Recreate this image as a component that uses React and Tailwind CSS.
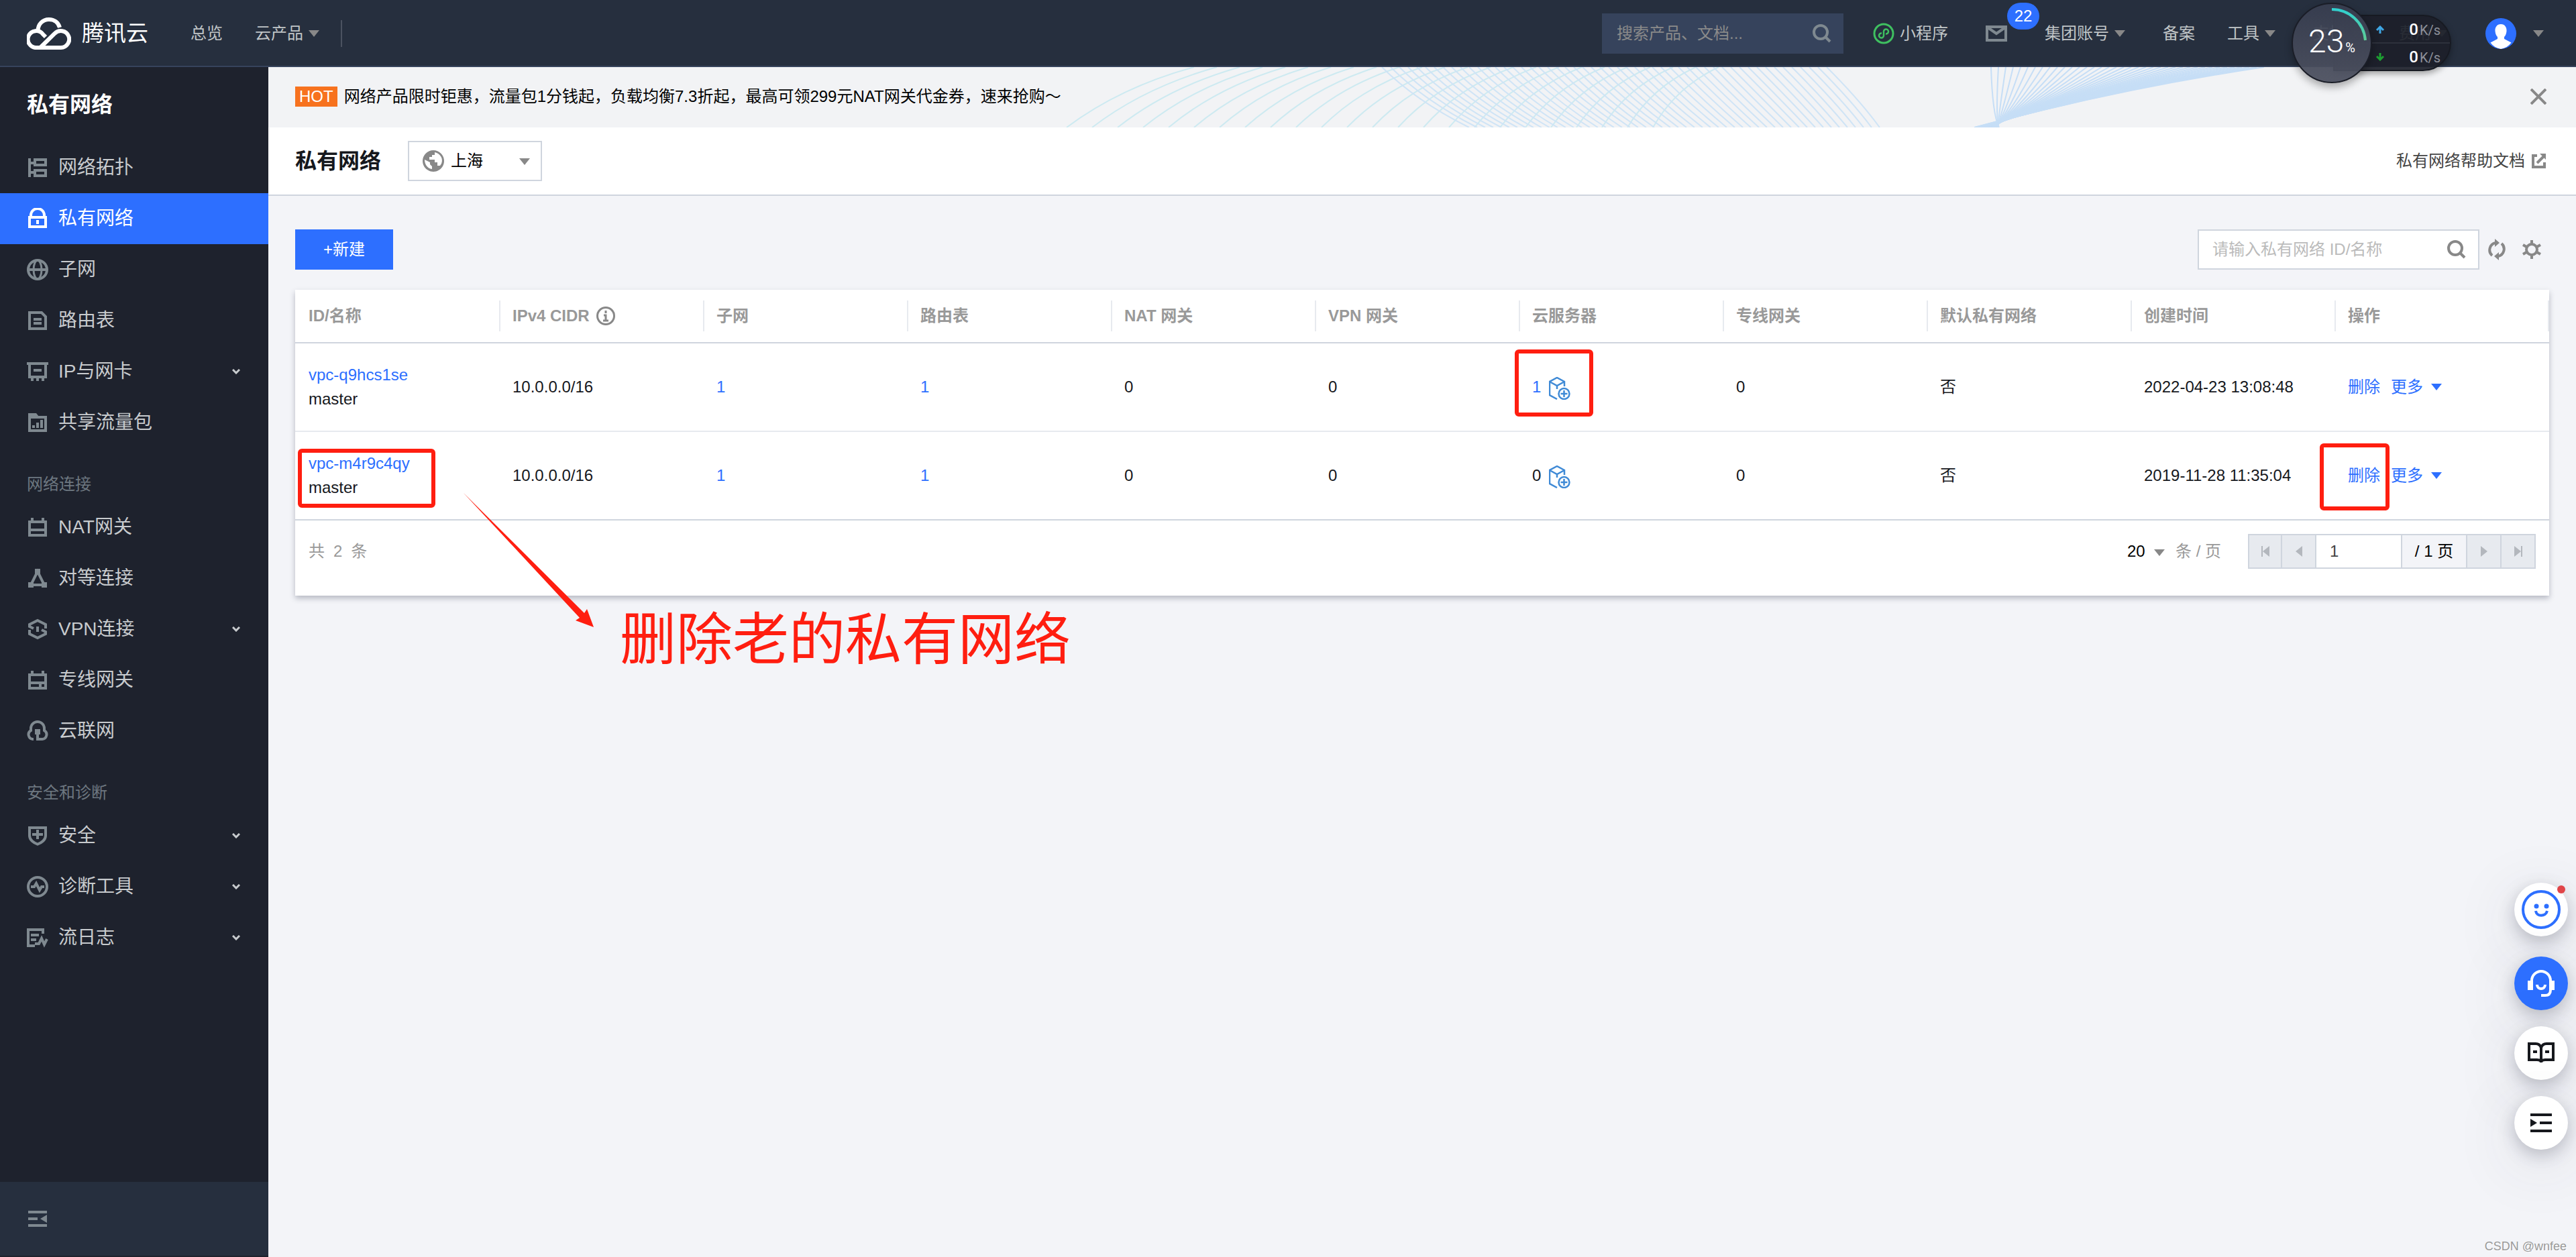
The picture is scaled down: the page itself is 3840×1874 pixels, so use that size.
const navGroups = [
  {
    title: "",
    items: [
      { label: "网络拓扑", icon: "topology" },
      { label: "私有网络", icon: "lock", active: true },
      { label: "子网", icon: "globe" },
      { label: "路由表", icon: "doc" },
      { label: "IP与网卡", icon: "card", expandable: true },
      { label: "共享流量包", icon: "traffic" },
    ],
  },
  {
    title: "网络连接",
    items: [
      { label: "NAT网关", icon: "nat" },
      { label: "对等连接", icon: "peer" },
      { label: "VPN连接", icon: "vpn", expandable: true },
      { label: "专线网关", icon: "direct" },
      { label: "云联网", icon: "ccn" },
    ],
  },
  {
    title: "安全和诊断",
    items: [
      { label: "安全", icon: "shield", expandable: true },
      { label: "诊断工具", icon: "pulse", expandable: true },
      { label: "流日志", icon: "log", expandable: true },
    ],
  },
];

const columns = [
  "ID/名称",
  "IPv4 CIDR",
  "子网",
  "路由表",
  "NAT 网关",
  "VPN 网关",
  "云服务器",
  "专线网关",
  "默认私有网络",
  "创建时间",
  "操作",
];

const vpcs = [
  { id: "vpc-q9hcs1se", name: "master", cidr: "10.0.0.0/16", servers: 1, created: "2022-04-23 13:08:48", mark: "servers" },
  { id: "vpc-m4r9c4qy", name: "master", cidr: "10.0.0.0/16", servers: 0, created: "2019-11-28 11:35:04", mark: "row" },
];

const navIcons = {
  topology: (
    <>
      <path d="M2 1v14M2 4.5h4M2 11.5h4" />
      <path d="M6 2h8v4H6zM6 10h8v4H6z" />
    </>
  ),
  lock: (
    <>
      <path d="M3 7V5.500a5 5 0 0 1 10 0V7" />
      <path d="M2 7h12v7H2z" />
      <path d="M8 9v3" />
    </>
  ),
  globe: (
    <>
      <circle cx="8" cy="8" r="7" />
      <ellipse cx="8" cy="8" rx="3" ry="7" strokeWidth="1.5" />
      <path d="M1 8h14" strokeWidth="2" />
    </>
  ),
  doc: (
    <>
      <path d="M2 2h9l3 3v9H2z" />
      <path d="M5 7h6M5 10h6" />
    </>
  ),
  card: (
    <>
      <path d="M0 2h16M2 2v10h12V2M4 12v3M8 12v3M12 12v3" />
      <path d="M5 7h6" />
    </>
  ),
  traffic: (
    <>
      <path d="M2 4h12v10H2z" />
      <path d="M1 1h6l2 2.500H1z" fill="currentColor" stroke="none" />
      <path d="M5 10v2M8 8v4M11 6v6" />
    </>
  ),
  nat: <path d="M2 4h12v10H2zM2 10h12M4 1v3M12 1v3" />,
  direct: <path d="M2 4h12v10H2zM2 10h12M4 1v3M12 1v3M10 10v4" />,
  peer: (
    <>
      <path d="M8 3L3 13h10z" />
      <path d="M6 1h4v4H6zM1 11h4v4H1zM11 11h4v4h-4z" fill="currentColor" stroke="none" />
    </>
  ),
  vpn: (
    <>
      <path d="M5 7.500L2 6V4.500l6-3 6 3V7.500" />
      <path d="M11 8.500L14 10v1.500l-6 3-6-3V8.500" />
      <path d="M8 6v4" />
    </>
  ),
  ccn: (
    <>
      <path d="M5 14H4.500A3.500 3.500 0 0 1 3 7.500V6a5 5 0 0 1 10 0v1.500A3.500 3.500 0 0 1 11.500 14H8V8" />
      <path d="M6 6.500h4v4H6z" fill="currentColor" stroke="none" />
    </>
  ),
  shield: (
    <>
      <path d="M2 2h12v6c0 3-3 5.300-6 6.300C5 13.300 2 11 2 8z" />
      <path d="M4 7h8M8 3.500v7" />
    </>
  ),
  pulse: (
    <>
      <circle cx="8" cy="8" r="7" />
      <path d="M3 8h2.500L7 5.500l2.500 5L11 8h2" />
    </>
  ),
  log: (
    <>
      <path d="M12 5V2H1v12h5" />
      <path d="M3 6h6M3 9.500h4M6 12.500h3l2-4 2 4.500 2-4" />
    </>
  ),
};

function NavIcon({ name }) {
  return (
    <svg className="size-8 shrink-0" viewBox="0 0 16 16" fill="none" stroke="currentColor" strokeWidth="2" aria-hidden="true">
      {navIcons[name]}
    </svg>
  );
}

function Caret({ className = "text-[#888]" }) {
  return (
    <svg className={`h-2.5 w-4 shrink-0 ${className}`} viewBox="0 0 16 10" fill="currentColor" aria-hidden="true">
      <path d="M0 0h16L8 10z" />
    </svg>
  );
}

function SearchIcon({ className }) {
  return (
    <svg className={`size-7 ${className}`} viewBox="0 0 28 28" fill="none" stroke="currentColor" strokeWidth="4" aria-hidden="true">
      <circle cx="12" cy="12" r="10" />
      <path d="M19 19l7 7" />
    </svg>
  );
}

function Logo() {
  return (
    <a href="#home" className="flex w-46 items-center gap-4 text-white">
      <svg className="h-12 w-[66px] shrink-0" viewBox="0 0 66 48" fill="none" stroke="currentColor" strokeWidth="6" aria-hidden="true">
        <path d="M28 29l-4-4A12.500 12.500 0 1 0 15.500 45H50.500A12.500 12.500 0 1 0 41.500 24L20 45" />
        <path d="M16.500 20C16.500 10 23.500 3 33 3c8 0 14 4.500 16 12" />
      </svg>
      <span className="text-[33px] leading-12 whitespace-nowrap">腾讯云</span>
    </a>
  );
}

function MonitorWidget() {
  return (
    <div className="absolute top-1 right-[186px] flex h-30 w-[238px] items-start">
      <div className="absolute top-[18px] right-0 flex h-[84px] w-44 flex-col rounded-r-[42px] border-2 border-[#171a22] bg-[#1c1f29]/92 shadow-[0_4px_10px_rgba(0,0,0,0.35)]">
        <Rate className="border-b-2 border-[#2d313c]">
          <path d="M7 12V2M2 7l5-5 5 5" stroke="#3ea6e4" />
        </Rate>
        <Rate>
          <path d="M7 0v10M2 5l5 5 5-5" stroke="#1da032" />
        </Rate>
      </div>
      <div className="relative flex size-30 items-center justify-center rounded-full border-2 border-[#1a1d27] bg-linear-to-b from-[#383e50]/92 to-[#4c505f]/95 shadow-[0_6px_12px_rgba(0,0,0,0.3)]">
        <svg className="absolute inset-0 size-full" viewBox="0 0 116 116" fill="none" aria-hidden="true">
          <defs>
            <linearGradient id="arc" x1="0" y1="0" x2="0" y2="1">
              <stop offset="0" stopColor="#31d0cf" />
              <stop offset="1" stopColor="#5ecb96" />
            </linearGradient>
          </defs>
          <path d="M58 8A50 50 0 0 1 108 54" stroke="url(#arc)" strokeWidth="4" />
        </svg>
        <div className="flex items-baseline gap-0.5 pb-1 text-white">
          <span className="font-[Roboto] text-5xl font-light">23</span>
          <span className="font-[Roboto] text-xl">%</span>
        </div>
      </div>
    </div>
  );
}

function Rate({ children, className = "" }) {
  return (
    <div className={`flex flex-1 items-center justify-end gap-9 pr-3.5 ${className}`}>
      <svg className="h-3 w-3.5" viewBox="0 0 14 12" fill="none" strokeWidth="3" aria-hidden="true">
        {children}
      </svg>
      <span className="flex items-baseline gap-0.5 font-[Roboto]">
        <b className="text-2xl font-medium text-white">0</b>
        <span className="text-xl text-[#8d919b]">K/s</span>
      </span>
    </div>
  );
}

function TopBar() {
  const menu = "flex items-center gap-2";
  return (
    <header className="relative z-10 flex h-25 shrink-0 items-center justify-between border-b-2 border-[#36435c] bg-[#262f3e] pt-0.5 pr-12 pl-10 text-2xl text-[#c1c6c8]">
      <div className="flex items-center">
        <Logo />
        <a href="#overview" className="ml-15">总览</a>
        <button type="button" className={`${menu} ml-12`}>云产品 <Caret /></button>
        <span className="ml-8 h-10 w-0.5 bg-[#4b5260]" />
      </div>
      <div className="flex items-center gap-14">
        <div className="flex items-center gap-11">
          <label className="flex h-15 w-90 items-center justify-between bg-[#36435c] pr-4.5 pl-5.5">
            <input className="w-64 bg-transparent outline-none placeholder:text-[#8a8a8a]" placeholder="搜索产品、文档..." aria-label="搜索产品、文档" />
            <SearchIcon className="text-[#7f8990]" />
          </label>
          <a href="#mini" className={menu}>
            <svg className="size-8" viewBox="0 0 32 32" fill="none" stroke="#3fc060" strokeWidth="3" aria-hidden="true">
              <circle cx="16" cy="16" r="14" />
              <path d="M13 15.500a3.500 3.500 0 1 0 3 3.500v-6a3.500 3.500 0 1 1 3 3.500" strokeWidth="2.500" />
            </svg>
            小程序
          </a>
        </div>
        <a href="#messages" className="relative" aria-label="消息">
          <svg className="h-6 w-8" viewBox="0 0 32 24" fill="none" stroke="#7f8990" strokeWidth="4" aria-hidden="true">
            <path d="M2 2h28v20H2zM3 3l13 9 13-9" />
          </svg>
          <span className="absolute -top-8.5 left-8 flex h-10 w-12 items-center justify-center rounded-full bg-[#2d6fff] text-2xl text-white">22</span>
        </a>
        <button type="button" className={menu}>集团账号 <Caret /></button>
        <div className="flex items-center gap-12">
          <a href="#beian">备案</a>
          <button type="button" className={menu}>工具 <Caret /></button>
        </div>
        <button type="button" className={menu}>支持 <Caret /></button>
        <button type="button" className={menu}>费用 <Caret /></button>
        <button type="button" className="flex items-center gap-6" aria-label="账号">
          <svg className="size-12" viewBox="0 0 48 48" aria-hidden="true">
            <circle cx="24" cy="24" r="23" fill="#2d6fff" />
            <path d="M24 10c6 0 9 5 8.500 10.500-.4 4-1.500 6.500-3.500 8.500v3l10.500 5.500A23 23 0 0 1 24 47 23 23 0 0 1 8.500 37.500L19 32v-3c-2-2-3.100-4.500-3.500-8.500C15 15 18 10 24 10z" fill="#fff" />
          </svg>
          <Caret />
        </button>
      </div>
      <MonitorWidget />
    </header>
  );
}

function Sidebar() {
  return (
    <aside className="flex w-100 shrink-0 flex-col bg-[#1e222d] text-[28px] text-[#c8cbce]">
      <h2 className="flex h-28 items-center px-10 text-[32px] font-bold text-white">私有网络</h2>
      <nav className="flex-1">
        {navGroups.map((group) => (
          <div key={group.title}>
            {group.title && <h3 className="px-10 pt-10 pb-3 text-2xl leading-7 text-[#6d7780]">{group.title}</h3>}
            {group.items.map((item) => (
              <a
                key={item.label}
                href={`#${item.icon}`}
                className={`flex h-19 items-center gap-[15px] pr-10.5 pl-10 ${item.active ? "bg-[#2d6fff] text-white" : ""}`}
              >
                <span className={item.active ? "text-white" : "text-[#7f8990]"}>
                  <NavIcon name={item.icon} />
                </span>
                {item.label}
                {item.expandable && (
                  <svg className="ml-auto h-2 w-3" viewBox="0 0 12 8" fill="none" stroke="currentColor" strokeWidth="3" aria-hidden="true">
                    <path d="M1 1l5 5 5-5" />
                  </svg>
                )}
              </a>
            ))}
          </div>
        ))}
      </nav>
      <div className="flex h-28 items-center border-b-2 border-[#1e222d] bg-[#262f3e] px-10">
        <button type="button" aria-label="收起菜单">
          <svg className="size-8 text-[#7f8990]" viewBox="0 0 16 16" fill="currentColor" aria-hidden="true">
            <path d="M1 2h14v2H1zM1 7h7v2H1zM1 12h14v2H1zM15 5v6l-5-3z" />
          </svg>
        </button>
      </div>
    </aside>
  );
}

function BannerArt() {
  const rise = Array.from({ length: 24 }, (_, i) => i);
  const wave = Array.from({ length: 52 }, (_, i) => i);
  const fan = Array.from({ length: 38 }, (_, i) => i);
  return (
    <svg className="absolute top-0 right-[440px] h-full w-[1820px]" viewBox="0 0 1820 90" preserveAspectRatio="none" fill="none" strokeWidth="2" aria-hidden="true">
      <g stroke="#cdeaf1">
        {rise.map((i) => (
          <path key={i} d={`M${10 + i * 38} 90Q${90 + i * 36} 30 ${200 + i * 34} 0`} />
        ))}
      </g>
      <g stroke="#cfe4f6">
        {wave.map((i) => (
          <path key={i} d={`M${480 + i * 13} 0Q${530 + i * 13} 50 ${610 + i * 12} 90`} />
        ))}
      </g>
      <g stroke="#c6def6">
        {fan.map((i) => (
          <path key={i} d={`M${1388 + i * 11} 0Q${1390 + i * 5} ${70 - i} ${1400 - i} 90`} />
        ))}
      </g>
    </svg>
  );
}

function Banner() {
  return (
    <div className="relative flex h-22.5 items-center justify-between overflow-hidden bg-[#f2f3f5] pr-11 pb-0.5 pl-10 text-2xl text-black">
      <BannerArt />
      <p className="relative flex items-center gap-2.5">
        <span className="bg-[#f7721e] px-1.5 leading-[30px] text-white">HOT</span>
        网络产品限时钜惠，流量包1分钱起，负载均衡7.3折起，最高可领299元NAT网关代金券，速来抢购～
      </p>
      <button type="button" className="relative" aria-label="关闭">
        <svg className="size-6 text-[#888]" viewBox="0 0 24 24" stroke="currentColor" strokeWidth="4" aria-hidden="true">
          <path d="M1 1l22 22M23 1L1 23" />
        </svg>
      </button>
    </div>
  );
}

function PageHeader() {
  return (
    <div className="flex h-[102px] items-center justify-between border-b-2 border-[#cfd5de] bg-white pr-11 pl-10 text-2xl">
      <div className="flex items-center gap-10">
        <h1 className="text-[32px] font-bold text-[#16181d]">私有网络</h1>
        <div className="relative">
          <select aria-label="地域" className="h-15 w-50 appearance-none border-2 border-[#cfd5de] bg-white pl-15.5 text-black">
            <option>上海</option>
          </select>
          <svg className="pointer-events-none absolute top-3.5 left-5.5 size-8" viewBox="0 0 32 32" aria-hidden="true">
            <circle cx="16" cy="16" r="16" fill="#888" />
            <path d="M18 3v4h-4v3h-4v4h8v4h4v5h4l2-3c3-7-1-15-10-17zM3 14c0 7 4 13 11 14v-4l-3-3v-3z" fill="#fff" />
          </svg>
          <span className="pointer-events-none absolute top-6.5 right-4.5 flex"><Caret /></span>
        </div>
      </div>
      <a href="#docs" className="flex items-center gap-2 text-[#444]">
        私有网络帮助文档
        <svg className="size-6" viewBox="0 0 24 24" fill="none" stroke="#888" strokeWidth="4" aria-hidden="true">
          <path d="M10 4H4v17h17v-7M10 15L20 5" />
          <path d="M14 1h9v9z" fill="#888" stroke="none" />
        </svg>
      </a>
    </div>
  );
}

function Toolbar() {
  return (
    <div className="flex items-center justify-between pr-3 text-2xl">
      <button type="button" className="h-15 bg-[#2d6fff] px-10.5 text-white">+新建</button>
      <div className="flex items-center gap-3">
        <label className="flex h-15 w-105 items-center justify-between border-2 border-[#cfd5de] bg-white pr-4.5 pl-5">
          <input className="w-80 bg-transparent outline-none placeholder:text-[#bbb]" placeholder="请输入私有网络 ID/名称" aria-label="请输入私有网络 ID/名称" />
          <SearchIcon className="text-[#888]" />
        </label>
        <button type="button" aria-label="刷新">
          <svg className="h-8 w-7" viewBox="0 0 28 32" fill="none" stroke="#888" strokeWidth="4" aria-hidden="true">
            <path d="M7 25A11 11 0 0 1 12 6M21 7a11 11 0 0 1-5 19" />
            <path d="M11 0l7 6-7 6zM17 20l-7 6 7 6z" fill="#888" stroke="none" />
          </svg>
        </button>
        <button type="button" className="ml-3" aria-label="设置">
          <svg className="size-7" viewBox="0 0 28 28" fill="none" stroke="#888" strokeWidth="4" aria-hidden="true">
            <circle cx="14" cy="14" r="8" />
            <path d="M14 0v6M14 22v6M1 7l6 3.500M21 17.500l6 3.500M27 7l-6 3.500M7 17.500L1 21" />
          </svg>
        </button>
      </div>
    </div>
  );
}

function InfoIcon() {
  return (
    <svg className="size-7" viewBox="0 0 28 28" fill="none" stroke="#888" strokeWidth="3" aria-hidden="true">
      <circle cx="14" cy="14" r="12.500" />
      <path d="M14 6v4M11 13h3v8M10 21h8" />
    </svg>
  );
}

function AddServerIcon() {
  return (
    <svg className="h-[34px] w-8" viewBox="0 0 32 34" fill="none" stroke="#3f8ad6" strokeWidth="2.500" aria-hidden="true">
      <path d="M23 14V7L12 1 1 7v20l11 6M1 7l11 6 11-6M12 13v5" />
      <circle cx="22.500" cy="25" r="8" />
      <path d="M22.500 20v10M17.500 25h10" />
    </svg>
  );
}

function VpcRow({ vpc, last }) {
  const cell = `h-33 border-b-2 pl-5 text-left align-middle ${last ? "border-[#cfd5de]" : "border-[#e7eaef]"}`;
  const mark = "pointer-events-none absolute rounded-md border-6 border-[#ff1e10]";
  return (
    <tr>
      <td className={`${cell} relative leading-9`}>
        <a href={`#${vpc.id}`} className="block text-[#2d6fff]">{vpc.id}</a>
        {vpc.name}
        {vpc.mark === "row" && <span className={`${mark} top-[25px] left-1 h-22 w-[205px]`} />}
      </td>
      <td className={cell}>{vpc.cidr}</td>
      <td className={cell}><a href="#subnets" className="text-[#2d6fff]">1</a></td>
      <td className={cell}><a href="#routes" className="text-[#2d6fff]">1</a></td>
      <td className={cell}>0</td>
      <td className={cell}>0</td>
      <td className={`${cell} relative`}>
        <span className="flex items-center gap-3">
          {vpc.servers > 0 ? <a href="#servers" className="text-[#2d6fff]">{vpc.servers}</a> : vpc.servers}
          <button type="button" className="pt-1" aria-label="添加云服务器"><AddServerIcon /></button>
        </span>
        {vpc.mark === "servers" && <span className={`${mark} top-[9px] -left-1.5 h-25 w-[117px]`} />}
      </td>
      <td className={cell}>0</td>
      <td className={cell}>否</td>
      <td className={cell}>{vpc.created}</td>
      <td className={`${cell} relative text-[#2d6fff]`}>
        <span className="flex items-center gap-4">
          <button type="button">删除</button>
          <button type="button" className="flex items-center gap-3">更多 <Caret className="text-[#2d6fff]" /></button>
        </span>
        {vpc.mark === "row" && <span className={`${mark} top-[17px] -left-5.5 h-25 w-[104px]`} />}
      </td>
    </tr>
  );
}

function Pager() {
  const box = "flex h-13 items-center justify-center border-y-2 border-r-2 border-[#cfd5de]";
  const step = `${box} w-[51px] bg-[#e7eaef] text-[#b3b7bd]`;
  return (
    <div className="flex">
      <button type="button" className={`${step} border-l-2`} aria-label="第一页">
        <svg className="h-4 w-3" viewBox="0 0 12 16" fill="currentColor"><path d="M0 0h2v16H0zM12 0v16L2 8z" /></svg>
      </button>
      <button type="button" className={step} aria-label="上一页">
        <svg className="h-4 w-2.5" viewBox="0 0 10 16" fill="currentColor"><path d="M10 0v16L0 8z" /></svg>
      </button>
      <input aria-label="页码" defaultValue="1" className="h-13 w-32 border-y-2 border-r-2 border-[#cfd5de] bg-white pl-5 text-[#444]" />
      <span className={`${box} w-[97px] bg-[#f3f4f8] text-black`}>/ 1 页</span>
      <button type="button" className={step} aria-label="下一页">
        <svg className="h-4 w-2.5" viewBox="0 0 10 16" fill="currentColor"><path d="M0 0v16l10-8z" /></svg>
      </button>
      <button type="button" className={step} aria-label="最后一页">
        <svg className="h-4 w-3" viewBox="0 0 12 16" fill="currentColor"><path d="M10 0h2v16h-2zM0 0v16l10-8z" /></svg>
      </button>
    </div>
  );
}

function VpcTable() {
  return (
    <section className="mt-[30px] bg-white text-2xl text-[#16181d] shadow-[0_4px_8px_rgba(54,58,80,0.32)]">
      <table className="w-full table-fixed border-separate border-spacing-0">
        <thead>
          <tr>
            {columns.map((name, i) => (
              <th key={name} className="w-76 border-b-2 border-[#cfd5de] py-4 text-left font-bold text-[#999] last:w-auto">
                <div
                  className={`flex h-[46px] items-center gap-2.5 border-l-2 pl-4.5 ${i === 0 ? "border-l-transparent" : "border-l-[#e7eaef]"} ${i === columns.length - 1 ? "border-r-2 border-r-[#e7eaef]" : ""}`}
                >
                  {name}
                  {i === 1 && <InfoIcon />}
                </div>
              </th>
            ))}
          </tr>
        </thead>
        <tbody>
          {vpcs.map((vpc, i) => (
            <VpcRow key={vpc.id} vpc={vpc} last={i === vpcs.length - 1} />
          ))}
        </tbody>
      </table>
      <div className="flex items-center justify-between px-5 pt-5 pb-10">
        <p className="flex gap-[13px] text-[#999]">
          <span>共</span>
          <span>2</span>
          <span>条</span>
        </p>
        <div className="flex items-center gap-10">
          <label className="flex items-center gap-4 text-[#999]">
            <span className="relative flex items-center">
              <select className="w-14 appearance-none bg-transparent text-black" defaultValue="20">
                <option>20</option>
              </select>
              <span className="pointer-events-none absolute right-0 flex pt-1"><Caret /></span>
            </span>
            条 / 页
          </label>
          <Pager />
        </div>
      </div>
    </section>
  );
}

function Annotation() {
  return (
    <div className="pointer-events-none absolute top-[734px] left-[690px] flex text-[#ff1e10]">
      <svg className="h-[204px] w-[198px]" viewBox="0 0 198 204" fill="currentColor" aria-hidden="true">
        <path d="M1 1L181 180l4-6 10 27-27-10 6-4z" />
      </svg>
      <p className="ml-9 pt-[170px] text-[84px] leading-25">删除老的私有网络</p>
    </div>
  );
}

function FloatingTools() {
  const round = "relative flex size-20 items-center justify-center rounded-full shadow-[0_8px_24px_rgba(54,58,80,0.28),0_20px_100px_rgba(54,58,80,0.14)]";
  return (
    <div className="absolute right-3 bottom-40 flex flex-col gap-6">
      <button type="button" className={`${round} mb-1.5 bg-white`} aria-label="反馈">
        <svg className="size-15" viewBox="0 0 60 60" fill="none" stroke="#2d6fff" strokeWidth="4" aria-hidden="true">
          <circle cx="30" cy="30" r="27" />
          <circle cx="23" cy="25" r="3.500" fill="#2d6fff" stroke="none" />
          <circle cx="38" cy="25" r="3.500" fill="#2d6fff" stroke="none" />
          <path d="M22 32c1 9 15 9 17 0" />
        </svg>
        <span className="absolute top-1 right-1 size-3 rounded-full bg-[#e04548]" />
      </button>
      <button type="button" className={`${round} bg-[#2d6fff]`} aria-label="在线客服">
        <svg className="size-10" viewBox="0 0 40 40" fill="none" stroke="#fff" strokeWidth="4" aria-hidden="true">
          <path d="M6 18v-2a14 14 0 0 1 28 0v0M34 16v14q0 8-8 8h-6" />
          <path d="M0 16h8v14H0zM34 16h6v14h-6z" fill="#fff" stroke="none" />
          <path d="M14 22c0 8 12 8 12 0" />
        </svg>
      </button>
      <button type="button" className={`${round} bg-white`} aria-label="文档">
        <svg className="h-8 w-10" viewBox="0 0 40 32" fill="none" stroke="#16181d" strokeWidth="4" aria-hidden="true">
          <path d="M20 30V8q-2-6-8-6H2v24h12q6 0 6 4 0-4 6-4h12V2H28q-6 0-8 6M8 14h6M26 14h6" />
        </svg>
      </button>
      <button type="button" className={`${round} bg-white`} aria-label="展开">
        <svg className="h-7 w-8" viewBox="0 0 32 28" fill="#16181d" aria-hidden="true">
          <path d="M0 0h32v4H0zM14 12h18v4H14zM0 24h32v4H0zM0 8l10 6-10 6z" />
        </svg>
      </button>
    </div>
  );
}

export default function App() {
  return (
    <div className="relative flex min-h-screen flex-col overflow-hidden bg-[#f3f4f8] font-['Liberation_Sans','Noto_Sans_CJK_SC',sans-serif]">
      <TopBar />
      <div className="flex flex-1">
        <Sidebar />
        <main className="min-w-0 flex-1">
          <Banner />
          <PageHeader />
          <div className="px-10 pt-[50px]">
            <Toolbar />
            <VpcTable />
          </div>
        </main>
      </div>
      <Annotation />
      <FloatingTools />
      <p className="absolute right-3.5 bottom-0.5 text-lg text-[#999] [text-shadow:1px_1px_0_#fff]">CSDN @wnfee</p>
    </div>
  );
}
